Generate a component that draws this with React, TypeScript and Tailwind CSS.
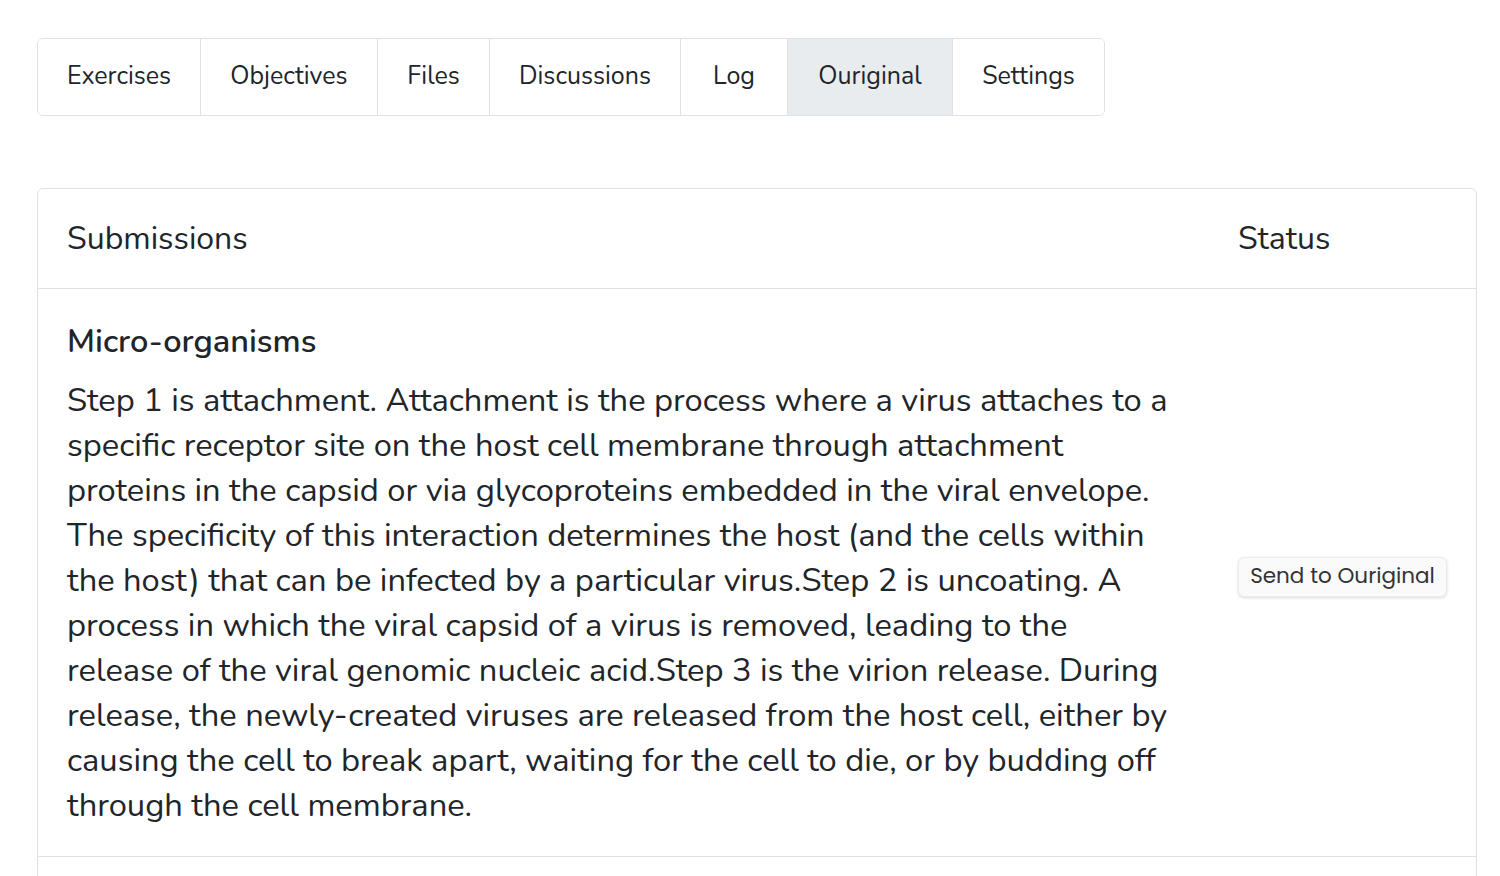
import React from 'react';

const tabs = [
  { label: 'Exercises', w: 'w-[162px]' },
  { label: 'Objectives', w: 'w-[177px]' },
  { label: 'Files', w: 'w-[112px]' },
  { label: 'Discussions', w: 'w-[191px]' },
  { label: 'Log', w: 'w-[107px]' },
  { label: 'Ouriginal', w: 'w-[165px]' },
  { label: 'Settings', w: 'w-[152px]' },
];

const lines = [
  'Step 1 is attachment. Attachment is the process where a virus attaches to a',
  'specific receptor site on the host cell membrane through attachment',
  'proteins in the capsid or via glycoproteins embedded in the viral envelope.',
  'The specificity of this interaction determines the host (and the cells within',
  'the host) that can be infected by a particular virus.Step 2 is uncoating. A',
  'process in which the viral capsid of a virus is removed, leading to the',
  'release of the viral genomic nucleic acid.Step 3 is the virion release. During',
  'release, the newly-created viruses are released from the host cell, either by',
  'causing the cell to break apart, waiting for the cell to die, or by budding off',
  'through the cell membrane.',
];

const App: React.FC = () => {
  return (
    <div className="min-h-[876px] bg-white text-[#212529] pt-[38px] pl-[37px] pr-[23px] font-['Nunito','Open_Sans',sans-serif]">
      {/* Tabs */}
      <div className="inline-flex border border-[#dee2e6] rounded-md overflow-hidden h-[78px]">
        {tabs.map((t, i) => (
          <div
            key={t.label}
            className={`flex items-center justify-center text-[25px] ${t.w} ${i > 0 ? 'border-l border-[#dee2e6]' : ''} ${t.label === 'Ouriginal' ? 'bg-[#e9ecef]' : 'bg-white'}`}
          >
            {t.label}
          </div>
        ))}
      </div>

      {/* Submissions table */}
      <div className="mt-[72px] border border-[#dee2e6] rounded-md">
        <div className="flex h-[100px] items-center border-b border-[#dee2e6] text-[32px]">
          <div className="flex-1 pl-[29px]">Submissions</div>
          <div className="w-[267px] pl-[29px]">Status</div>
        </div>
        <div className="flex border-b border-[#dee2e6]">
          <div className="flex-1 pl-[29px] pt-[30px] pb-[28px]">
            <div className="text-[32.5px] font-semibold leading-[44px] mb-[15px]">Micro-organisms</div>
            <p className="text-[32.7px] leading-[45px] whitespace-nowrap">
              {lines.map((l) => (
                <span key={l} className="block">{l}</span>
              ))}
            </p>
          </div>
          <div className="w-[267px] pl-[29px] pt-[8px] flex items-center">
            <button className="h-[40px] w-[209px] rounded-md bg-[#fafafa] border border-[#ececec] shadow-[0_1px_3px_rgba(0,0,0,0.15)] text-[21.5px] text-[#333] font-['Poppins','Inter',sans-serif]">
              Send to Ouriginal
            </button>
          </div>
        </div>
        <div className="h-[40px]" />
      </div>
    </div>
  );
};

export default App;
